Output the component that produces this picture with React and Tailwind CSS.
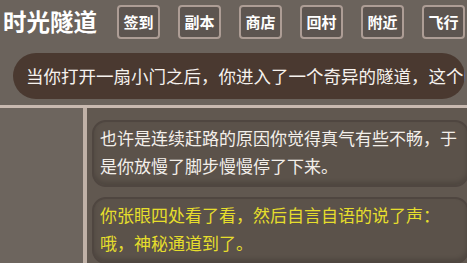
import React from 'react';

const NAV = ['签到', '副本', '商店', '回村', '附近', '飞行'];

const font = { fontFamily: '"Noto Sans CJK SC", "Noto Sans", sans-serif' };

function Bubble({ lines, yellow }) {
  return (
    <div
      className={`rounded-[14px] border-2 border-[#4f4640] bg-[#5b524a] pl-[6px] pt-[2px] pb-[5px] text-[17px] leading-[28px] shadow-[inset_0_-3px_4px_rgba(0,0,0,0.15)] ${
        yellow ? 'text-[#e6de2c]' : 'text-[#f3efea]'
      }`}
    >
      {lines.map((l) => (
        <div key={l} className="whitespace-nowrap">{l}</div>
      ))}
    </div>
  );
}

export default function App() {
  return (
    <div className="w-[467px] h-[263px] overflow-hidden bg-[#6b635c] flex flex-col" style={font}>
      {/* header */}
      <div className="flex items-center pt-[5px] h-[39px] shrink-0">
        <div className="pl-[3px] w-[117px] text-[23.5px] font-bold text-white leading-none whitespace-nowrap">时光隧道</div>
        <div className="flex gap-[18px]">
          {NAV.map((n) => (
            <div
              key={n}
              className="w-[43px] h-[34px] shrink-0 rounded-[4px] border-2 border-[#ad9d95] bg-[#5d5550] flex items-center justify-center text-[15px] font-bold text-white"
            >
              {n}
            </div>
          ))}
        </div>
      </div>

      {/* story bar */}
      <div className="mt-[14px] ml-[13px] w-[452px] h-[46px] shrink-0 rounded-full bg-[#4a3930] overflow-hidden flex items-center pl-[13px]">
        <span className="whitespace-nowrap text-[17.5px] text-[#f6f2ee]">当你打开一扇小门之后，你进入了一个奇异的隧道，这个隧</span>
      </div>

      <div className="mt-[6px] h-[3px] shrink-0 bg-[#c8b9b0]" />

      {/* body */}
      <div className="flex flex-1 min-h-0">
        <div className="w-[83px] shrink-0 bg-[#6d655e]" />
        <div className="w-[4px] shrink-0 bg-[#c0b1a7]" />
        <div className="flex-1 bg-[#615850] pl-[5px] pt-[12px] flex flex-col gap-[10px] -mr-[2px]">
          <Bubble lines={['也许是连续赶路的原因你觉得真气有些不畅，于', '是你放慢了脚步慢慢停了下来。']} />
          <Bubble yellow lines={['你张眼四处看了看，然后自言自语的说了声：', '哦，神秘通道到了。']} />
        </div>
      </div>
    </div>
  );
}
